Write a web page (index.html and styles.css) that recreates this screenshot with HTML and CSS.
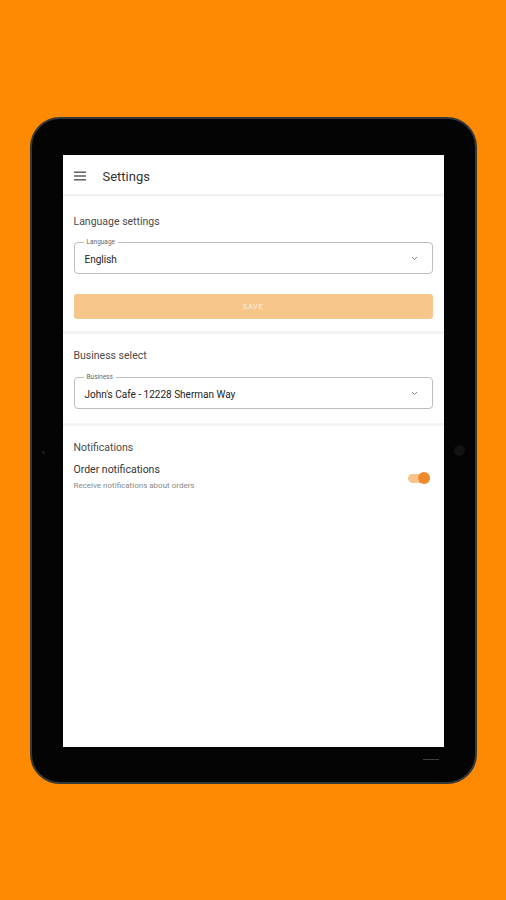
FILE: index.html
```html
<!DOCTYPE html>
<html lang="en">
<head>
<meta charset="utf-8">
<title>Settings</title>
<link rel="stylesheet" href="styles.css">
</head>
<body>
  <div class="tablet">
    <span class="cam-left"></span>
    <span class="cam-right"></span>
    <span class="slot"></span>
    <div class="screen">
      <header class="appbar">
        <svg class="menu" width="12" height="10" viewBox="0 0 12 10"><rect x="0" y="0.5" width="12" height="1.4" fill="#555"/><rect x="0" y="4.3" width="12" height="1.4" fill="#555"/><rect x="0" y="8.1" width="12" height="1.4" fill="#555"/></svg>
        <span class="title">Settings</span>
      </header>
      <section class="section sec-lang">
        <div class="sec-title">Language settings</div>
        <div class="field">
          <span class="field-label">Language</span>
          <span class="field-value">English</span>
          <svg class="chev" width="7" height="5" viewBox="0 0 7 5"><path d="M1 1 L3.5 3.5 L6 1" fill="none" stroke="#888" stroke-width="1"/></svg>
        </div>
        <button class="save">SAVE</button>
      </section>
      <section class="section sec-biz">
        <div class="sec-title">Business select</div>
        <div class="field">
          <span class="field-label">Business</span>
          <span class="field-value">John's Cafe - 12228 Sherman Way</span>
          <svg class="chev" width="7" height="5" viewBox="0 0 7 5"><path d="M1 1 L3.5 3.5 L6 1" fill="none" stroke="#888" stroke-width="1"/></svg>
        </div>
      </section>
      <section class="section sec-notif">
        <div class="sec-title">Notifications</div>
        <div class="notif-row">
          <div class="notif-text">
            <div class="notif-name">Order notifications</div>
            <div class="notif-desc">Receive notifications about orders</div>
          </div>
          <div class="toggle"><span class="thumb"></span></div>
        </div>
      </section>
    </div>
  </div>
</body>
</html>
```

FILE: styles.css
```css
html, body {
  margin: 0;
  padding: 0;
}
body {
  background: #fd8a02;
  height: 900px;
  display: flex;
  justify-content: center;
  align-items: flex-start;
  font-family: Roboto, "Liberation Sans", Arial, sans-serif;
}
.tablet {
  position: relative;
  box-sizing: border-box;
  margin-top: 117px;
  width: 447px;
  height: 667px;
  background: #040404;
  border: 2px solid #33383b;
  border-radius: 30px;
  padding: 36px 31px 35px 31px;
  display: flex;
}
.cam-left {
  position: absolute;
  left: 10px;
  top: 332px;
  width: 3px;
  height: 3px;
  border-radius: 50%;
  background: #1e1e1e;
}
.cam-right {
  position: absolute;
  right: 10px;
  top: 326px;
  width: 11px;
  height: 11px;
  border-radius: 50%;
  background: #121212;
}
.slot {
  position: absolute;
  right: 36px;
  bottom: 22px;
  width: 16px;
  height: 1px;
  background: #3a3f42;
}
.screen {
  flex: 1;
  background: #fff;
  display: flex;
  flex-direction: column;
}
.appbar {
  height: 40px;
  display: flex;
  align-items: center;
  padding-left: 11px;
  padding-top: 3px;
  box-shadow: 0 1px 2px rgba(0,0,0,0.08);
  border-bottom: 1px solid #efefef;
  box-sizing: border-box;
}
.menu {
  display: block;
}
.title {
  margin-left: 17px;
  font-size: 13px;
  color: #333;
}
.section {
  padding: 0 11px;
  border-bottom: 3px solid #f4f4f4;
  display: flex;
  flex-direction: column;
}
.sec-title {
  font-size: 10.5px;
  line-height: 14px;
  color: #4a4a4a;
}
.sec-lang {
  padding-top: 20px;
  padding-bottom: 12px;
}
.sec-biz {
  padding-top: 15px;
  padding-bottom: 14px;
}
.sec-notif {
  padding-top: 15px;
  border-bottom: none;
}
.field {
  position: relative;
  height: 32px;
  box-sizing: border-box;
  border: 1px solid #bdbdbd;
  border-radius: 4px;
  margin-top: 13px;
  display: flex;
  align-items: center;
  padding: 0 14px 0 10px;
}
.sec-biz .field {
  margin-top: 14px;
}
.field-label {
  position: absolute;
  left: 9px;
  top: -5px;
  font-size: 6.5px;
  line-height: 8px;
  color: #666;
  background: #fff;
  padding: 0 3px;
}
.field-value {
  flex: 1;
  font-size: 10px;
  color: #222;
  padding-top: 2px;
}
.chev {
  display: block;
}
.save {
  margin-top: 20px;
  height: 25px;
  border: none;
  border-radius: 3px;
  background: #f6c68b;
  color: rgba(255,255,255,0.6);
  font-family: Roboto, "Liberation Sans", Arial, sans-serif;
  font-size: 7.5px;
  font-weight: 500;
  letter-spacing: 0.5px;
  padding: 0;
}
.notif-row {
  margin-top: 8px;
  display: flex;
  align-items: center;
}
.notif-text {
  flex: 1;
}
.notif-name {
  font-size: 10.5px;
  line-height: 14px;
  color: #333;
}
.notif-desc {
  margin-top: 4px;
  font-size: 8px;
  line-height: 10px;
  color: #888;
}
.toggle {
  position: relative;
  width: 22px;
  height: 9px;
  border-radius: 5px;
  background: #f7c48c;
  margin-right: 3px;
  margin-top: 2px;
}
.thumb {
  position: absolute;
  right: 0;
  top: -1.5px;
  width: 12px;
  height: 12px;
  border-radius: 50%;
  background: #ee8a2b;
}
```
